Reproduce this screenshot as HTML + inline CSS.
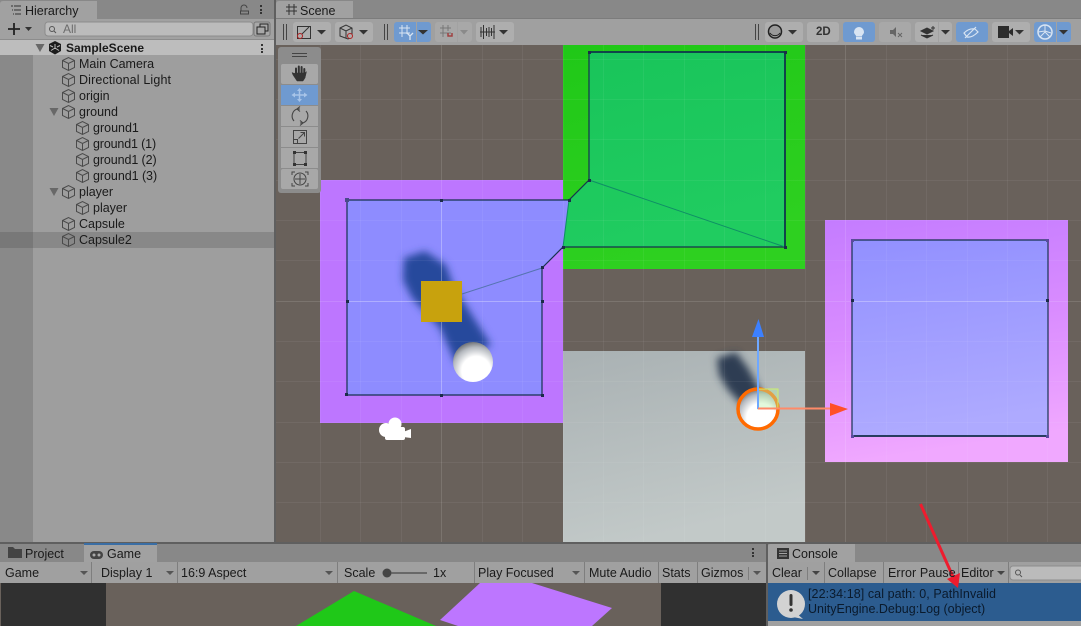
<!DOCTYPE html>
<html><head><meta charset="utf-8"><style>
html,body{margin:0;padding:0;background:#5f5f5f}
#r{position:relative;width:1081px;height:626px;overflow:hidden;font-family:"Liberation Sans",sans-serif;font-size:12.5px;color:#1a1a1a;background:#5f5f5f}
.a,.t{position:absolute}
.t{white-space:nowrap;line-height:16px}
svg{position:absolute;left:0;top:0}
</style></head><body><div id="r">
<svg width="1081" height="626" viewBox="0 0 1081 626">
<defs>
<linearGradient id="pr" x1="0" y1="0" x2="0.15" y2="1"><stop offset="0" stop-color="#c47cff"/><stop offset=".5" stop-color="#d98cff"/><stop offset="1" stop-color="#f0a8ff"/></linearGradient>
<linearGradient id="br" x1="0" y1="0" x2="0.15" y2="1"><stop offset="0" stop-color="#9290ff"/><stop offset="1" stop-color="#aeaaff"/></linearGradient>
<linearGradient id="gr" x1="0" y1="0" x2="0.3" y2="1"><stop offset="0" stop-color="#20c818"/><stop offset="1" stop-color="#2ed020"/></linearGradient>
<linearGradient id="ig" x1="0" y1="0" x2="0.3" y2="1"><stop offset="0" stop-color="#19c45a"/><stop offset="1" stop-color="#20cc60"/></linearGradient>
<linearGradient id="gy" x1="0" y1="0" x2="0.3" y2="1"><stop offset="0" stop-color="#a9b1b3"/><stop offset="1" stop-color="#c2c9c8"/></linearGradient>
<radialGradient id="sp" cx=".58" cy=".72" r=".72"><stop offset="0" stop-color="#fff"/><stop offset=".5" stop-color="#fff"/><stop offset=".82" stop-color="#b4b8be"/><stop offset="1" stop-color="#74777b"/></radialGradient>
<filter id="b3" x="-30%" y="-30%" width="160%" height="160%"><feGaussianBlur stdDeviation="4"/></filter>
</defs>
<!-- panels -->
<rect x="0" y="0" width="274" height="542" fill="#9e9e9e"/>
<rect x="0" y="0" width="274" height="19" fill="#888"/>
<path d="M0 19V4Q0 1 3 1H97V19Z" fill="#a1a1a1"/>
<rect x="0" y="19" width="274" height="21" fill="#a1a1a1"/>
<rect x="0" y="39" width="274" height="1" fill="#8c8c8c"/>
<rect x="0" y="40" width="33" height="502" fill="#898989"/>
<rect x="33" y="55" width="241" height="487" fill="#9e9e9e"/>
<rect x="0" y="40" width="274" height="15" fill="#bdbdbd"/>
<rect x="0" y="232" width="33" height="16" fill="#787878"/>
<rect x="33" y="232" width="241" height="16" fill="#888"/>
<rect x="274" y="0" width="2" height="542" fill="#5f5f5f"/>
<!-- search field -->
<rect x="45" y="22" width="208" height="14" rx="3" fill="#bbb" stroke="#8c8c8c"/>
<rect x="254" y="22" width="16" height="14" rx="2" fill="#a8a8a8" stroke="#777"/>
<path d="M257 27h8v7h-8zM260 27v-3h8v7h-3" fill="none" stroke="#222"/>
<circle cx="52" cy="29" r="2.500" fill="none" stroke="#555"/><path d="M54 31l2 2" stroke="#555"/>
<!-- plus -->
<path d="M8 29h12M14 23v12" stroke="#222" stroke-width="1.800"/><path d="M25 27h7l-3.500 4z" fill="#333"/>
<!-- hierarchy tab icon -->
<path d="M11 6h2M14 6h7M12 10h1M14 10h7M13 14h1M15 14h6" stroke="#333" stroke-width="1"/>
<!-- lock, dots -->
<path d="M241 10v-3a3 3 0 0 1 6 0M240.500 10h8v3h-8z" fill="none" stroke="#444" transform="translate(0 1)"/>
<g fill="#333"><rect x="260" y="5" width="2" height="2"/><rect x="260" y="9" width="2" height="2"/><rect x="260" y="12" width="2" height="2"/></g>
<g fill="#333"><rect x="261" y="44" width="2" height="2"/><rect x="261" y="48" width="2" height="2"/><rect x="261" y="51" width="2" height="2"/></g>
<!-- arrows hierarchy -->
<g fill="#686868"><path d="M35.500 44h9l-4.500 8z"/><path d="M49.500 108h9l-4.500 8z"/><path d="M49.500 188h9l-4.500 8z"/></g>
<!-- unity logo -->
<path d="M55 41l6 3v7l-6 3.500-6-3.500v-7z" fill="#1c1c1c"/><path d="M55 44v5M55 48l-4 2.500M55 48l4 2.500M50 45.500l3 1.500M60 45.500l-3 1.500" stroke="#bdbdbd" stroke-width="1"/>
<!-- cubes -->
<defs><g id="c" fill="none" stroke="#4a4a4a" stroke-width="1"><path d="M0 -3.500L6 -6.500L12 -3.500V3.500L6 6.500L0 3.500ZM0 -3.500L6 -.5L12 -3.500M6 -.5V6.500"/></g></defs>
<use href="#c" x="62.500" y="64"/><use href="#c" x="62.500" y="80"/><use href="#c" x="62.500" y="96"/><use href="#c" x="62.500" y="112"/>
<use href="#c" x="76.500" y="128"/><use href="#c" x="76.500" y="144"/><use href="#c" x="76.500" y="160"/><use href="#c" x="76.500" y="176"/>
<use href="#c" x="62.500" y="192"/><use href="#c" x="76.500" y="208"/><use href="#c" x="62.500" y="224"/><use href="#c" x="62.500" y="240"/>

<!-- scene tab bar -->
<rect x="276" y="0" width="805" height="19" fill="#888"/>
<path d="M276 19V4Q276 1 279 1H353V19Z" fill="#a1a1a1"/>
<path d="M286 7h11M286 11h11M289 4v11M294 4v11" stroke="#333" stroke-width="1"/>
<rect x="276" y="18" width="805" height="1" fill="#7c7c7c"/>
<rect x="353" y="18" width="0" height="1"/>
<rect x="276" y="19" width="805" height="26" fill="#a0a0a0"/>
<!-- scene -->
<rect x="276" y="45" width="805" height="497" fill="#69615b"/>
<rect x="320" y="180" width="243" height="243" fill="#bd76ff"/>
<rect x="563" y="45" width="242" height="224" fill="url(#gr)"/>
<rect x="563" y="351" width="242" height="191" fill="url(#gy)"/>
<rect x="825" y="220" width="243" height="242" fill="url(#pr)"/>
<!-- navmesh -->
<path d="M347 200H569L563 247L542 268V395H347Z" fill="#8e8cff"/>
<path d="M589 52H785V247H563L569 200L589 180Z" fill="url(#ig)"/>
<rect x="852" y="240" width="196" height="196" fill="url(#br)"/>
<!-- shadows -->
<path d="M404 258L425 251L446 265L453 285L491 345L456 364L440 328L412 298L403 280Z" fill="#28489c" filter="url(#b3)"/>
<path d="M717 358L736 352L748 368L763 395L745 408L728 390L719 375Z" fill="#2f3d52" filter="url(#b3)"/>
<!-- grid -->
<g stroke="#fff" stroke-opacity=".055" stroke-width="1">
<path d="M320.500 45V542M360.500 45V542M401.500 45V542M482.500 45V542M522.500 45V542M563.500 45V542M603.500 45V542M643.500 45V542M684.500 45V542M724.500 45V542M765.500 45V542M805.500 45V542M886.500 45V542M926.500 45V542M967.500 45V542M1007.500 45V542M1047.500 45V542"/>
<path d="M276 59.500H1081M276 99.500H1081M276 139.500H1081M276 180.500H1081M276 220.500H1081M276 260.500H1081M276 341.500H1081M276 381.500H1081M276 422.500H1081M276 462.500H1081M276 502.500H1081"/>
</g>
<g stroke="#fff" stroke-opacity=".12" stroke-width="1"><path d="M441.500 45V542M845.500 45V542M276 301.500H1081"/></g>
<g stroke="#fff" stroke-opacity=".2" stroke-width="1"><path d="M441.500 200V395M347 301.500H542M852 301.500H1048"/></g>
<!-- navmesh outlines -->
<g fill="none" stroke="#17324f" stroke-width="1.200">
<path d="M542 268V395H347V200H569L589 180V52H785V247H563L542 268"/>
<path d="M852 240H1048V436H852Z"/>
</g>
<path d="M589 52H785V247" fill="none" stroke="#0f3a4c" stroke-width="1.800"/>
<path d="M852 436H1048" stroke="#17324f" stroke-width="1.800"/>
<g stroke="#3d6a8e" stroke-opacity=".7" fill="none" stroke-width="1"><path d="M462 294L542 268"/></g>
<g stroke="#0f8e66" stroke-width="1" fill="none"><path d="M589 180L785 247M569 200L563 247"/></g>
<g fill="#1c2c4a"><rect x="345" y="198" width="4" height="4" fill="#4a4a8a"/><rect x="440" y="199" width="3" height="3"/><rect x="346" y="300" width="3" height="3"/><rect x="541" y="300" width="3" height="3"/><rect x="440" y="394" width="3" height="3"/><rect x="345" y="393" width="3" height="3"/><rect x="541" y="394" width="3" height="3"/><rect x="541" y="266" width="3" height="3"/><rect x="568" y="199" width="3" height="3"/><rect x="588" y="179" width="3" height="3"/><rect x="588" y="51" width="3" height="3"/><rect x="784" y="51" width="3" height="3"/><rect x="784" y="246" width="3" height="3"/><rect x="562" y="246" width="3" height="3"/>
<rect x="851" y="299" width="3" height="3"/><rect x="1046" y="299" width="3" height="3"/><rect x="851" y="239" width="3" height="3" fill="#5a4aa0"/><rect x="1046" y="239" width="3" height="3" fill="#5a4aa0"/><rect x="851" y="435" width="3" height="3" fill="#5a4aa0"/><rect x="1046" y="435" width="3" height="3" fill="#5a4aa0"/></g>
<!-- cube + sphere -->
<rect x="421" y="281" width="41" height="41" fill="#c8a20d"/>
<circle cx="473" cy="362" r="20" fill="url(#sp)"/>
<!-- camera -->
<g fill="#fff"><circle cx="395" cy="424" r="6.500"/><circle cx="386" cy="430" r="7"/><rect x="385" y="427" width="20" height="13" rx="2"/><path d="M403 432l8-3v9l-8-1z"/></g>
<!-- capsule2 gizmo -->
<circle cx="758" cy="409" r="20" fill="url(#sp)" stroke="#ff6a00" stroke-width="3.500"/>
<rect x="758" y="389" width="20" height="20" fill="#b6f0a8" fill-opacity=".4" stroke="#cdf06c" stroke-width="1"/>
<path d="M758 409V336" stroke="#6fa8ff" stroke-width="2"/>
<path d="M758.500 319L764 337H752Z" fill="#3c80ff"/>
<path d="M758 408.500H832" stroke="#ff8a68" stroke-width="2"/>
<path d="M848 409L830 403V416Z" fill="#ff5028"/>
<!-- scene toolbar overlay -->
<rect x="278" y="47" width="43" height="146" rx="3" fill="#8c8c8c"/>
<path d="M292 53.500h15M292 56.500h15" stroke="#444"/>
<g fill="#a8a8a8"><rect x="281" y="64" width="37" height="20" rx="2"/><rect x="281" y="106" width="37" height="20"/><rect x="281" y="127" width="37" height="20"/><rect x="281" y="148" width="37" height="20"/><rect x="281" y="169" width="37" height="20" rx="2"/></g>
<rect x="281" y="85" width="37" height="20" fill="#6f9ad0"/>
<!-- hand -->
<g fill="#333" stroke="#333" stroke-linecap="round">
<path d="M296 74V68.500" stroke-width="2"/><path d="M298.800 73V66.500" stroke-width="2"/><path d="M301.600 73V67" stroke-width="2"/><path d="M304.300 74V69" stroke-width="2"/>
<path d="M295 73h10l1.500-1.500L305 78l-2 3h-6l-4-6-1-2.500 2.500 1z" stroke-width=".5"/>
</g>
<path d="M299.500 89v12M293 95h13" stroke="#a8c4e8" stroke-width="1.500"/>
<path d="M297 91l2.500-3 2.500 3zM297 99l2.500 3 2.500-3zM295 92.500l-3.500 2.500 3.500 2.500zM304 92.500l3.500 2.500-3.500 2.500z" fill="#a8c4e8"/>
<path d="M294 121a7.500 7.500 0 0 1 3-12h3M306 111a7.500 7.500 0 0 1-3 12h-3M300 106.500l-3 2.500 3 2.500M300 120.500l3 2.500-3 2.500" fill="none" stroke="#444" stroke-width="1.100"/>
<path d="M293.500 130.500h13v13h-13zM293.500 139.500h4v4h-4zM298.500 138.500l6-6M300.500 132.500h4v4" fill="none" stroke="#444"/>
<path d="M296 152.500h8M296 164.500h8M294 154v9M306 154v9" stroke="#444" fill="none"/>
<g fill="#333"><rect x="293" y="151" width="3" height="3"/><rect x="304" y="151" width="3" height="3"/><rect x="293" y="163" width="3" height="3"/><rect x="304" y="163" width="3" height="3"/></g>
<circle cx="300" cy="179" r="6" fill="none" stroke="#444"/><path d="M300 174v10M295 179h10" stroke="#444"/><path d="M292 175v-3h3M308 175v-3h-3M292 183v3h3M308 183v3h-3" fill="none" stroke="#444"/>
<!-- top toolbar -->
<g stroke="#444"><path d="M283.500 24v16M286.500 24v16M384.500 24v16M387.500 24v16M755.500 24v16M758.500 24v16"/></g>
<g fill="#aeaeae">
<rect x="293" y="22" width="38" height="20" rx="3"/><rect x="335" y="22" width="38" height="20" rx="3"/>
<rect x="435" y="22" width="37" height="20" rx="3" fill="#a8a8a8"/><rect x="476" y="22" width="38" height="20" rx="3"/>
<rect x="765" y="22" width="38" height="20" rx="3"/><rect x="807" y="22" width="32" height="20" rx="3"/>
<rect x="879" y="22" width="32" height="20" rx="3" fill="#a8a8a8"/><rect x="915" y="22" width="37" height="20" rx="3"/>
<rect x="992" y="22" width="38" height="20" rx="3"/>
</g>
<g fill="#6f9ad0"><rect x="394" y="22" width="37" height="20" rx="3"/><rect x="843" y="22" width="32" height="20" rx="3"/><rect x="956" y="22" width="32" height="20" rx="3"/><rect x="1034" y="22" width="37" height="20" rx="3"/></g>
<g stroke="#a2a2a2"><path d="M416.500 22v20M457.500 22v20M938.500 22v20M1056.500 22v20"/></g>
<g fill="#333"><path d="M317 30h9l-4.500 4.500z"/><path d="M359 30h9l-4.500 4.500z"/><path d="M418 30h10l-5 4.500z"/><path d="M460 30h8l-4 4.500z" fill="#8a8a8a"/><path d="M499 30h9l-4.500 4.500z"/><path d="M788 30h9l-4.500 4.500z"/><path d="M941 30h9l-4.500 4.500z"/><path d="M1015 30h9l-4.500 4.500z"/><path d="M1059 30h9l-4.500 4.500z"/></g>
<path d="M297.500 26.500h13v12h-13zM299 37l10-10" fill="none" stroke="#333"/><circle cx="300" cy="36" r="2.500" fill="#aeaeae" stroke="#b02020"/>
<path d="M340 28l6-3 6 3v9l-4 2-8-3zM340 28l6 3 6-3M346 31v7" fill="none" stroke="#333"/><circle cx="350" cy="36" r="2.500" fill="#aeaeae" stroke="#b02020"/>
<path d="M399 28h11M399 33h11M402 25v12M407 25v9" stroke="#d8e4f2" fill="none"/><path d="M407 33l3 3 3-3M410 36v4" stroke="#d8e4f2" fill="none" stroke-width="1.300"/>
<path d="M440 28h11M440 33h11M443 25v12M448 25v6" stroke="#777" fill="none"/><path d="M448 33v3h4v-3" fill="none" stroke="#a04040" stroke-width="1.500"/>
<path d="M481 27v10M483.500 25v14M486.500 28v8M489 27v10M491.500 28v8M494 25v14M480 32h15" stroke="#333" fill="none"/>
<circle cx="775" cy="31.500" r="6.500" fill="#9a9a9a" stroke="#222" stroke-width="1.500"/><path d="M770 33a6 6 0 0 0 10 0" fill="none" stroke="#222"/>
<path d="M859 27a5 5 0 0 1 5 5c0 2-2 3-2 4h-6c0-1-2-2-2-4a5 5 0 0 1 5-5z" fill="#d8e4f2"/><rect x="856" y="36.500" width="6" height="3" fill="#d8e4f2"/>
<path d="M890 30h3l3-3v10l-3-3h-3z" fill="#666"/><path d="M898 33l4 4M902 33l-4 4" stroke="#666"/>
<path d="M921 31l6-3 6 3-6 3zM921 35l6 3 6-3M933 26v4M931 28h4" fill="#333" stroke="#333"/>
<path d="M965 38l11-11M964 33q5-5 11-4l3 3q-6 6-11 5z" fill="none" stroke="#d8e4f2" stroke-width="1.200"/>
<path d="M998 26h11v12h-11zM1009 31l4-3v8l-4-3z" fill="#2c2c2c"/>
<circle cx="1045" cy="32" r="7" fill="none" stroke="#d8e4f2" stroke-width="1.500"/><path d="M1038 32l7-1 6 2M1045 25v7l-5 5M1045 32l5 5" stroke="#d8e4f2" fill="none"/>
<!-- bottom panels -->
<rect x="0" y="543" width="1081" height="83" fill="#888"/>
<rect x="0" y="542" width="1081" height="2" fill="#5f5f5f"/>
<rect x="766" y="542" width="2" height="84" fill="#5f5f5f"/>
<rect x="84" y="544" width="73" height="20" fill="#a1a1a1"/><rect x="84" y="543" width="73" height="2" fill="#3a6ea5"/>
<rect x="0" y="562" width="766" height="21" fill="#a0a0a0"/>
<g stroke="#7e7e7e"><path d="M91.500 562v21M177.500 562v21M337.500 562v21M474.500 562v21M584.500 562v21M658.500 562v21M697.500 562v21M748.500 567v13"/></g>
<path d="M8 546h5l2 2h7v9H8z" fill="#444" transform="translate(0 1)"/>
<rect x="90" y="551" width="13" height="8" rx="4" fill="#444"/><circle cx="94" cy="555" r="1.500" fill="#aaa"/><circle cx="99" cy="555" r="1.500" fill="#aaa"/>
<g fill="#555"><path d="M80 571h8l-4 4z"/><path d="M166 571h8l-4 4z"/><path d="M325 571h8l-4 4z"/><path d="M572 571h8l-4 4z"/><path d="M753 571h8l-4 4z"/></g>
<circle cx="387" cy="573" r="4.500" fill="#444"/><path d="M391 573h36" stroke="#555" stroke-width="1.500"/>
<g fill="#333"><rect x="752" y="548" width="2" height="2"/><rect x="752" y="552" width="2" height="2"/><rect x="752" y="555" width="2" height="2"/></g>
<!-- game view -->
<rect x="0" y="583" width="766" height="43" fill="#69615b"/>
<rect x="1" y="583" width="105" height="43" fill="#303030"/><rect x="661" y="583" width="105" height="43" fill="#303030"/>
<path d="M296 626L354 591L436 626Z" fill="#1fc818"/>
<path d="M480 583H532L612 608L592 626H458L440 620Z" fill="#bd76ff"/>
<!-- console -->
<rect x="768" y="544" width="313" height="18" fill="#888"/>
<path d="M768 562V546Q768 544 771 544H855V562Z" fill="#a1a1a1"/>
<path d="M777 548h12v11h-12z" fill="#333"/><path d="M779 551h8M779 553.500h8M779 556h8" stroke="#a1a1a1"/>
<rect x="768" y="562" width="313" height="21" fill="#a0a0a0"/>
<g stroke="#7e7e7e"><path d="M824.500 562v21M883.500 562v21M958.500 562v21M1008.500 562v21M807.500 567v13"/></g>
<g fill="#444"><path d="M812 571h8l-4 4z"/><path d="M997 571h8l-4 4z"/></g>
<rect x="1010" y="566" width="80" height="14" rx="3" fill="#bbb" stroke="#8c8c8c"/>
<circle cx="1018" cy="572.500" r="2.500" fill="none" stroke="#555"/><path d="M1020 575l2 2" stroke="#555"/>
<rect x="768" y="583" width="313" height="38" fill="#2c5c8f"/>
<rect x="768" y="621" width="313" height="5" fill="#a0a0a0"/>
<circle cx="791" cy="604" r="14" fill="#d2d2d2"/><path d="M796 613l7 6-10-2z" fill="#d2d2d2"/>
<rect x="789.500" y="594" width="3" height="12" rx="1.500" fill="#333"/><circle cx="791" cy="610" r="1.800" fill="#333"/>
<!-- red arrow -->
<path d="M920.500 504L954 579" stroke="#ee1c2e" stroke-width="3"/>
<path d="M958 588L947 579L960 573Z" fill="#ee1c2e"/>
</svg>
<div class="t" style="left:25px;top:3px">Hierarchy</div>
<div class="t" style="left:63px;top:21px;color:#6c6c6c;font-size:12px">All</div>
<div class="t" style="left:66px;top:40px;font-weight:bold;font-size:12px">SampleScene</div>
<div class="t" style="left:79px;top:56px">Main Camera</div>
<div class="t" style="left:79px;top:72px;letter-spacing:.15px">Directional Light</div>
<div class="t" style="left:79px;top:88px">origin</div>
<div class="t" style="left:79px;top:104px">ground</div>
<div class="t" style="left:93px;top:120px">ground1</div>
<div class="t" style="left:93px;top:136px;letter-spacing:-.15px">ground1 (1)</div>
<div class="t" style="left:93px;top:152px;letter-spacing:-.1px">ground1 (2)</div>
<div class="t" style="left:93px;top:168px;letter-spacing:-.05px">ground1 (3)</div>
<div class="t" style="left:79px;top:184px">player</div>
<div class="t" style="left:93px;top:200px">player</div>
<div class="t" style="left:79px;top:216px">Capsule</div>
<div class="t" style="left:79px;top:232px">Capsule2</div>
<div class="t" style="left:300px;top:3px">Scene</div>
<div class="t" style="left:816px;top:24px;font-weight:bold;font-size:11.500px;color:#333">2D</div>
<div class="t" style="left:25px;top:546px">Project</div>
<div class="t" style="left:107px;top:546px">Game</div>
<div class="t" style="left:5px;top:565px">Game</div>
<div class="t" style="left:101px;top:565px">Display 1</div>
<div class="t" style="left:181px;top:565px">16:9 Aspect</div>
<div class="t" style="left:344px;top:565px">Scale</div>
<div class="t" style="left:433px;top:565px">1x</div>
<div class="t" style="left:478px;top:565px">Play Focused</div>
<div class="t" style="left:589px;top:565px">Mute Audio</div>
<div class="t" style="left:662px;top:565px">Stats</div>
<div class="t" style="left:701px;top:565px">Gizmos</div>
<div class="t" style="left:792px;top:546px">Console</div>
<div class="t" style="left:772px;top:565px">Clear</div>
<div class="t" style="left:828px;top:565px">Collapse</div>
<div class="t" style="left:888px;top:565px;letter-spacing:.1px">Error Pause</div>
<div class="t" style="left:961px;top:565px">Editor</div>
<div class="t" style="left:808px;top:586px;color:#0a1a2c;letter-spacing:.07px">[22:34:18] cal path: 0, PathInvalid</div>
<div class="t" style="left:808px;top:601px;color:#0a1a2c">UnityEngine.Debug:Log (object)</div>
</div></body></html>
